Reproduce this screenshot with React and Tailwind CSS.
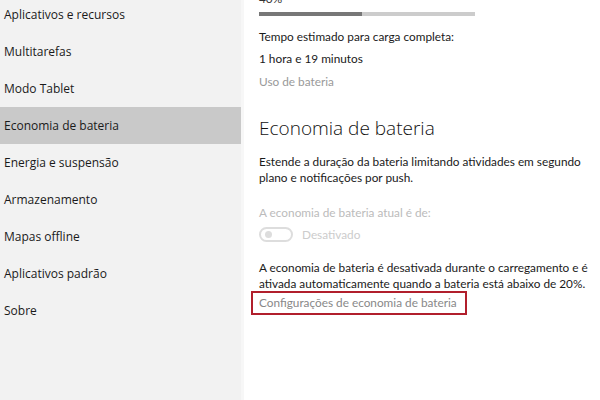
import React from "react";

const menu = [
  "Aplicativos e recursos",
  "Multitarefas",
  "Modo Tablet",
  "Economia de bateria",
  "Energia e suspensão",
  "Armazenamento",
  "Mapas offline",
  "Aplicativos padrão",
  "Sobre",
];

export default function App() {
  return (
    <div
      className="flex w-[600px] h-[400px] overflow-hidden text-[12px] text-[#1a1a1a]"
      style={{ fontFamily: '"Open Sans", "Noto Sans", sans-serif' }}
    >
      {/* Menu lateral */}
      <div className="w-[241px] shrink-0 bg-[#f2f2f2]">
        <div className="-mt-[4px]">
          {menu.map((item) => (
            <div
              key={item}
              className={`h-[37px] flex items-center pl-[4px] ${
                item === "Economia de bateria" ? "bg-[#c9c9c9]" : ""
              }`}
            >
              {item}
            </div>
          ))}
        </div>
      </div>

      {/* Conteúdo */}
      <div
        className="flex-1 bg-white border-l-[3px] border-[#f7f7f7] pl-[15px] whitespace-nowrap text-[11.8px]"
        style={{ fontFamily: 'Lato, "Open Sans", sans-serif' }}
      >
        <div className="-mt-[8px] leading-[14px] text-[#333]">40%</div>
        <div className="mt-[6px] w-[216px] h-[4px] bg-[#cccccc] flex">
          <div className="w-[103px] h-full bg-[#777777]" />
        </div>

        <div className="mt-[11px] leading-[20px]">Tempo estimado para carga completa:</div>
        <div className="mt-[2px] leading-[20px]">1 hora e 19 minutos</div>
        <div className="mt-[3px] leading-[20px] text-[#999999]">Uso de bateria</div>

        <h2
          className="mt-[24px] text-[19px] font-light leading-[24px] text-[#111]"
          style={{ fontFamily: '"Open Sans", sans-serif' }}
        >
          Economia de bateria
        </h2>

        <p className="mt-[14px] leading-[16px]">
          Estende a duração da bateria limitando atividades em segundo
          <br />
          plano e notificações por push.
        </p>

        <div className="mt-[18px] leading-[18px] text-[#bbbbbb]">
          A economia de bateria atual é de:
        </div>

        <div className="mt-[4px] flex items-center gap-[9px]">
          <div className="w-[34px] h-[15px] rounded-full border-[2px] border-[#dddddd] flex items-center pl-[4px]">
            <div className="w-[7px] h-[7px] rounded-full bg-[#dddddd]" />
          </div>
          <span className="text-[#cccccc]">Desativado</span>
        </div>

        <p className="mt-[16px] leading-[16px]">
          A economia de bateria é desativada durante o carregamento e é
          <br />
          ativada automaticamente quando a bateria está abaixo de 20%.
        </p>

        <div className="-ml-[8px] -mt-[1px] w-[216px] h-[24px] border-[2px] border-[#b11f2c] flex items-center pl-[6px] text-[#888888]">
          Configurações de economia de bateria
        </div>
      </div>
    </div>
  );
}
